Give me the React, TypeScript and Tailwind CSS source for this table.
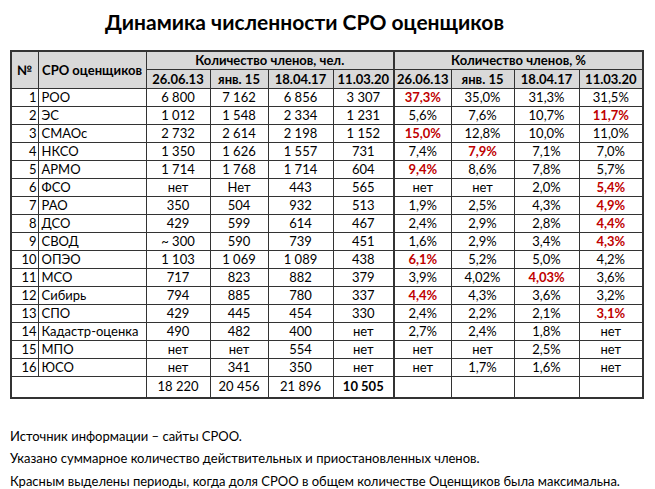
import React from "react";

type Cell = string | { v: string; red?: boolean };

const rows: { n: number; name: string; abs: string[]; pct: Cell[] }[] = [
  { n: 1, name: "РОО", abs: ["6 800", "7 162", "6 856", "3 307"], pct: [{ v: "37,3%", red: true }, "35,0%", "31,3%", "31,5%"] },
  { n: 2, name: "ЭС", abs: ["1 012", "1 548", "2 334", "1 231"], pct: ["5,6%", "7,6%", "10,7%", { v: "11,7%", red: true }] },
  { n: 3, name: "СМАОс", abs: ["2 732", "2 614", "2 198", "1 152"], pct: [{ v: "15,0%", red: true }, "12,8%", "10,0%", "11,0%"] },
  { n: 4, name: "НКСО", abs: ["1 350", "1 626", "1 557", "731"], pct: ["7,4%", { v: "7,9%", red: true }, "7,1%", "7,0%"] },
  { n: 5, name: "АРМО", abs: ["1 714", "1 768", "1 714", "604"], pct: [{ v: "9,4%", red: true }, "8,6%", "7,8%", "5,7%"] },
  { n: 6, name: "ФСО", abs: ["нет", "Нет", "443", "565"], pct: ["нет", "нет", "2,0%", { v: "5,4%", red: true }] },
  { n: 7, name: "РАО", abs: ["350", "504", "932", "513"], pct: ["1,9%", "2,5%", "4,3%", { v: "4,9%", red: true }] },
  { n: 8, name: "ДСО", abs: ["429", "599", "614", "467"], pct: ["2,4%", "2,9%", "2,8%", { v: "4,4%", red: true }] },
  { n: 9, name: "СВОД", abs: ["~ 300", "590", "739", "451"], pct: ["1,6%", "2,9%", "3,4%", { v: "4,3%", red: true }] },
  { n: 10, name: "ОПЭО", abs: ["1 103", "1 069", "1 089", "438"], pct: [{ v: "6,1%", red: true }, "5,2%", "5,0%", "4,2%"] },
  { n: 11, name: "МСО", abs: ["717", "823", "882", "379"], pct: ["3,9%", "4,02%", { v: "4,03%", red: true }, "3,6%"] },
  { n: 12, name: "Сибирь", abs: ["794", "885", "780", "337"], pct: [{ v: "4,4%", red: true }, "4,3%", "3,6%", "3,2%"] },
  { n: 13, name: "СПО", abs: ["429", "445", "454", "330"], pct: ["2,4%", "2,2%", "2,1%", { v: "3,1%", red: true }] },
  { n: 14, name: "Кадастр-оценка", abs: ["490", "482", "400", "нет"], pct: ["2,7%", "2,4%", "1,8%", "нет"] },
  { n: 15, name: "МПО", abs: ["нет", "нет", "554", "нет"], pct: ["нет", "нет", "2,5%", "нет"] },
  { n: 16, name: "ЮСО", abs: ["нет", "341", "350", "нет"], pct: ["нет", "1,7%", "1,6%", "нет"] },
];

const dates = ["26.06.13", "янв. 15", "18.04.17", "11.03.20"];
const widths = [27, 108, 64, 58, 65, 61, 57, 63, 65, 64];

const td = "border border-[#333] h-[18px] p-0 leading-[17px]";
const th = "border border-[#333] bg-[#d9d9d9] font-bold p-0 leading-[17px]";

export default function App() {
  return (
    <div
      className="w-[655px] h-[489px] bg-white text-black pl-[10px] pt-[8px]"
      style={{ fontFamily: "Lato, 'Noto Sans', sans-serif" }}
    >
      <h1 className="text-[21px] font-bold leading-[28px] text-center pr-[56px] h-[42px]">
        Динамика численности СРО оценщиков
      </h1>
      <table className="table-fixed border-collapse border-2 border-[#333] text-[13px] w-[632px]">
        <colgroup>
          {widths.map((w, i) => (
            <col key={i} style={{ width: w }} />
          ))}
        </colgroup>
        <thead>
          <tr className="h-[18px]">
            <th rowSpan={2} className={th}>№</th>
            <th rowSpan={2} className={th}>СРО оценщиков</th>
            <th colSpan={4} className={`${th} border-r-2`}>Количество членов, чел.</th>
            <th colSpan={4} className={th}>Количество членов, %</th>
          </tr>
          <tr className="h-[19px]">
            {dates.map((d, i) => (
              <th key={"a" + i} className={`${th} ${i === 3 ? "border-r-2" : ""}`}>{d}</th>
            ))}
            {dates.map((d, i) => (
              <th key={"p" + i} className={th}>{d}</th>
            ))}
          </tr>
        </thead>
        <tbody>
          {rows.map((r) => (
            <tr key={r.n}>
              <td className={`${td} text-right pr-[1px]`}>{r.n}</td>
              <td className={`${td} text-left pl-[3px]`}>{r.name}</td>
              {r.abs.map((a, i) => (
                <td key={i} className={`${td} text-center ${i === 3 ? "border-r-2" : ""}`}>{a}</td>
              ))}
              {r.pct.map((p, i) => {
                const c = typeof p === "string" ? { v: p } : p;
                return (
                  <td key={i} className={`${td} text-center ${c.red ? "text-[#c00000] font-bold" : ""}`}>
                    {c.v}
                  </td>
                );
              })}
            </tr>
          ))}
          <tr className="h-[21px]">
            <td colSpan={2} className={td}></td>
            <td className={`${td} text-center`}>18 220</td>
            <td className={`${td} text-center`}>20 456</td>
            <td className={`${td} text-center`}>21 896</td>
            <td className={`${td} text-center font-bold border-r-2`}>10 505</td>
            <td className={td}></td>
            <td className={td}></td>
            <td className={td}></td>
            <td className={td}></td>
          </tr>
        </tbody>
      </table>
      <div className="text-[13px] leading-[22.5px] mt-[26px]">
        <p>Источник информации – сайты СРОО.</p>
        <p>Указано суммарное количество действительных и приостановленных членов.</p>
        <p>Красным выделены периоды, когда доля СРОО в общем количестве Оценщиков была максимальна.</p>
      </div>
    </div>
  );
}
